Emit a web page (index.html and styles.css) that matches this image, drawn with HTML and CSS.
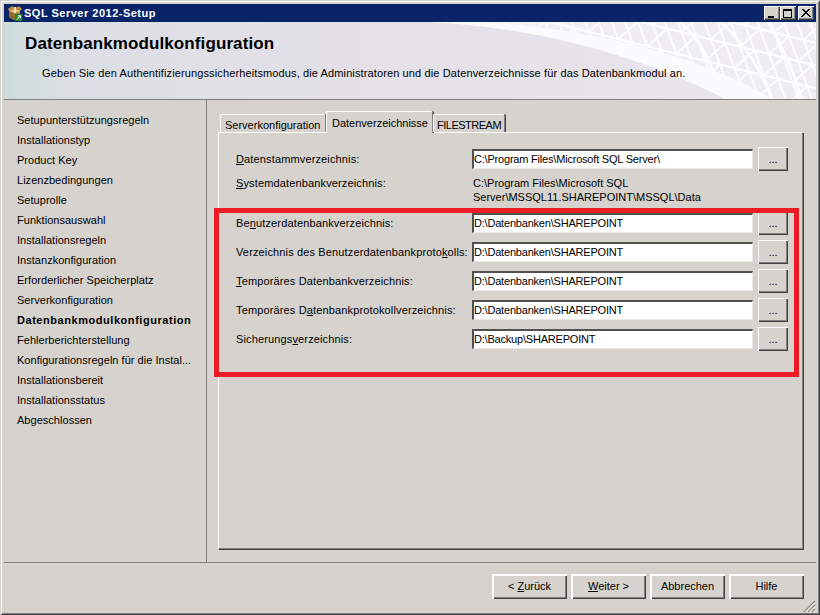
FILE: index.html
```html
<!DOCTYPE html>
<html lang="de">
<head>
<meta charset="utf-8">
<title>SQL Server 2012-Setup</title>
<link rel="stylesheet" href="styles.css">
</head>
<body>
<div class="window">
  <div class="titlebar">
    <svg class="app-icon" width="16" height="16" viewBox="0 0 16 16">
      <path d="M1 4 L5 1 L8 3 L12 1 L15 4 L13 6 L13 12 L7 15 L2 12 L2 6 Z" fill="#b98c44"/>
      <path d="M2 6 L8 8 L13 6 L8 4 Z" fill="#e3c27c"/>
      <path d="M7 2 L9 2 L9 8 L7 8 Z" fill="#f3e2b0"/>
      <path d="M2 6 L7 8 L7 15 L2 12 Z" fill="#94692c"/>
      <rect x="8" y="9" width="7" height="7" fill="#2f8f2f" stroke="#1c5f1c" stroke-width="0.6"/>
      <path d="M10 14.5 L13.2 11 M11 10.8 H13.5 V13.2" stroke="#fff" stroke-width="1" fill="none"/>
    </svg>
    <span class="title-text">SQL Server 2012-Setup</span>
    <div class="caption-buttons">
      <button class="cap-btn" aria-label="Minimieren"><svg width="10" height="9" viewBox="0 0 10 9"><rect x="1" y="7" width="6" height="2" fill="#000"/></svg></button>
      <button class="cap-btn" aria-label="Maximieren"><svg width="10" height="9" viewBox="0 0 10 9"><path d="M0 0H9V9H0Z M1 2V8H8V2Z" fill="#000" fill-rule="evenodd"/></svg></button>
      <button class="cap-btn cap-close" aria-label="Schließen"><svg width="10" height="9" viewBox="0 0 10 9"><path d="M1 0 L9 8 M9 0 L1 8 M2 0 L10 8 M8 0 L0 8" stroke="#000" stroke-width="1" fill="none"/></svg></button>
    </div>
  </div>

  <header class="banner">
    <svg class="banner-art" width="812" height="78" viewBox="0 0 812 78">
      <defs>
        <linearGradient id="bg" x1="0" x2="1" y1="0" y2="0">
          <stop offset="0" stop-color="#cedcde"/>
          <stop offset="0.09" stop-color="#dcdfe5"/>
          <stop offset="0.4" stop-color="#e3e0e8"/>
          <stop offset="1" stop-color="#e9e6ec"/>
        </linearGradient>
        <linearGradient id="fade" x1="0" x2="1" y1="0" y2="0">
          <stop offset="0" stop-color="#f8f6f9" stop-opacity="1"/>
          <stop offset="1" stop-color="#f8f6f9" stop-opacity="0"/>
        </linearGradient>
        <pattern id="mesh" width="30" height="22" patternUnits="userSpaceOnUse" patternTransform="rotate(14)">
          <rect width="30" height="22" fill="#efecf2"/>
          <path d="M0 0 H30 M0 22 H30 M0 22 L15 0 L30 22 M0 0 L15 22" stroke="#fff" stroke-width="1.8" fill="none"/>
        </pattern>
        <clipPath id="upper"><path d="M480 0 C600 8 700 36 770 78 L812 78 L812 0 Z"/></clipPath>
      </defs>
      <rect width="812" height="78" fill="url(#bg)"/>
      <path d="M425 0 C545 6 650 40 723 78 L812 78 L812 0 Z" fill="#fbfafc"/>
      <g clip-path="url(#upper)">
        <rect x="470" width="342" height="78" fill="url(#mesh)"/>
        <path d="M676 0 C700 20 712 50 716 78 M716 0 C742 22 758 50 768 78 M764 0 C778 22 790 50 798 78" stroke="#fff" stroke-width="2.5" fill="none"/>
        <rect x="470" width="130" height="78" fill="url(#fade)"/>
      </g>
    </svg>
    <h1 class="banner-title">Datenbankmodulkonfiguration</h1>
    <p class="banner-desc">Geben Sie den Authentifizierungssicherheitsmodus, die Administratoren und die Datenverzeichnisse für das Datenbankmodul an.</p>
  </header>

  <main class="middle">
    <nav class="steps">
      <div class="step">Setupunterstützungsregeln</div>
      <div class="step">Installationstyp</div>
      <div class="step">Product Key</div>
      <div class="step">Lizenzbedingungen</div>
      <div class="step">Setuprolle</div>
      <div class="step">Funktionsauswahl</div>
      <div class="step">Installationsregeln</div>
      <div class="step">Instanzkonfiguration</div>
      <div class="step">Erforderlicher Speicherplatz</div>
      <div class="step">Serverkonfiguration</div>
      <div class="step step-current">Datenbankmodulkonfiguration</div>
      <div class="step">Fehlerberichterstellung</div>
      <div class="step">Konfigurationsregeln für die Instal...</div>
      <div class="step">Installationsbereit</div>
      <div class="step">Installationsstatus</div>
      <div class="step">Abgeschlossen</div>
    </nav>

    <section class="content">
      <div class="tabs">
        <div class="tab tab-first">Serverkonfiguration</div>
        <div class="tab tab-active">Datenverzeichnisse</div>
        <div class="tab tab-last">FILESTREAM</div>
      </div>
      <div class="panel">
        <div class="form">
          <label class="lbl"><u>D</u>atenstammverzeichnis:</label>
          <div class="field">C:\Program Files\Microsoft SQL Server\</div>
          <button class="browse">...</button>

          <label class="lbl lbl-top"><u>S</u>ystemdatenbankverzeichnis:</label>
          <div class="static-path">C:\Program Files\Microsoft SQL Server\MSSQL11.SHAREPOINT\MSSQL\Data</div>
          <div></div>

          <label class="lbl">Be<u>n</u>utzerdatenbankverzeichnis:</label>
          <div class="field">D:\Datenbanken\SHAREPOINT</div>
          <button class="browse">...</button>

          <label class="lbl">Verzeichnis des Benutzerdatenbankproto<u>k</u>olls:</label>
          <div class="field">D:\Datenbanken\SHAREPOINT</div>
          <button class="browse">...</button>

          <label class="lbl"><u>T</u>emporäres Datenbankverzeichnis:</label>
          <div class="field">D:\Datenbanken\SHAREPOINT</div>
          <button class="browse">...</button>

          <label class="lbl">Temporäres D<u>a</u>tenbankprotokollverzeichnis:</label>
          <div class="field">D:\Datenbanken\SHAREPOINT</div>
          <button class="browse">...</button>

          <label class="lbl">Sicherungs<u>v</u>erzeichnis:</label>
          <div class="field">D:\Backup\SHAREPOINT</div>
          <button class="browse">...</button>
        </div>
      </div>
    </section>
  </main>

  <footer class="footer">
    <button class="btn">&lt; <u>Z</u>urück</button>
    <button class="btn"><u>W</u>eiter &gt;</button>
    <button class="btn">Abbrechen</button>
    <button class="btn">Hilfe</button>
    <svg class="grip" width="13" height="13" viewBox="0 0 13 13">
      <path d="M12 1 L1 12 M12 5 L5 12 M12 9 L9 12" stroke="#808080" stroke-width="1.2" fill="none"/>
      <path d="M12 2.5 L2.5 12 M12 6.5 L6.5 12 M12 10.5 L10.5 12" stroke="#fff" stroke-width="1" fill="none"/>
    </svg>
  </footer>

  <div class="highlight"></div>
</div>
</body>
</html>
```
FILE: styles.css
```css
* { box-sizing: border-box; }
html, body { margin: 0; padding: 0; }
body { width: 820px; height: 615px; overflow: hidden; font-family: "Liberation Sans", Arial, sans-serif; font-size: 11px; color: #000; }
u { text-underline-offset: 1px; }

.window {
  position: relative;
  width: 820px;
  height: 615px;
  display: flex;
  flex-direction: column;
  padding: 4px 4px 2px;
  background: #d6d3ce;
  box-shadow: inset 1px 1px 0 #d6d3ce, inset -1px -1px 0 #404040, inset 2px 2px 0 #fff, inset -2px -2px 0 #808080;
}

.titlebar {
  height: 18px;
  flex: none;
  display: flex;
  align-items: center;
  background: #0a246a;
  color: #fff;
  padding: 0 2px 0 3px;
}
.app-icon { flex: none; margin-right: 1px; }
.title-text { font-weight: bold; font-size: 11px; letter-spacing: 0.5px; }
.caption-buttons { margin-left: auto; display: flex; }
.cap-btn {
  width: 16px;
  height: 14px;
  padding: 0;
  display: flex;
  align-items: center;
  justify-content: center;
  background: #d6d3ce;
  border: 0;
  box-shadow: inset 1px 1px 0 #fff, inset -1px -1px 0 #404040, inset -2px -2px 0 #808080;
}
.cap-close { margin-left: 2px; }

.banner {
  position: relative;
  height: 78px;
  flex: none;
  overflow: hidden;
  padding: 12px 21px 0;
  border-bottom: 1px solid #808080;
}
.banner-art { position: absolute; left: 0; top: 0; }
.banner-title { position: relative; margin: 0; font-size: 17px; line-height: 20px; font-weight: bold; letter-spacing: 0.1px; }
.banner-desc { position: relative; margin: 12px 0 0 17px; line-height: 14px; white-space: nowrap; letter-spacing: 0.12px; }

.middle {
  flex: 1;
  min-height: 0;
  display: flex;
  border-bottom: 1px solid #808080;
}
.steps {
  width: 203px;
  flex: none;
  padding: 10px 0 0 13px;
  border-right: 1px solid #808080;
}
.step { height: 20px; line-height: 20px; white-space: nowrap; letter-spacing: 0.03px; }
.step-current { font-weight: bold; letter-spacing: 0.55px; }

.content {
  flex: 1;
  min-width: 0;
  padding: 11px 13px 13px 11px;
  display: flex;
  flex-direction: column;
}
.tabs { display: flex; height: 21px; flex: none; align-items: flex-end; position: relative; z-index: 1; }
.tab {
  height: 18px;
  line-height: 18px;
  padding: 1px 4px 0;
  background: #d6d3ce;
  border-top: 1px solid #fff;
  border-left: 1px solid #fff;
  border-right: 1px solid #808080;
  box-shadow: 1px 0 0 #404040;
  border-radius: 2px 2px 0 0;
  white-space: nowrap;
}
.tab-first { width: 106px; margin-left: 2px; }
.tab-active { width: 107px; height: 22px; line-height: 22px; padding: 0 5px; margin-bottom: -1px; text-align: center; }
.tab-last { width: 72px; padding-left: 3px; padding-right: 0; letter-spacing: -0.5px; }

.panel {
  flex: 1;
  min-height: 0;
  background: #d6d3ce;
  border-top: 1px solid #fff;
  border-left: 1px solid #fff;
  border-right: 1px solid #808080;
  border-bottom: 1px solid #808080;
  box-shadow: 1px 1px 0 #404040;
  padding: 14px 0 0 17px;
}
.form {
  display: grid;
  grid-template-columns: 231px 281px 30px;
  grid-template-rows: 24px 30px 24px 24px 24px 24px 24px;
  column-gap: 5px;
  row-gap: 5px;
  align-items: center;
}
.lbl { white-space: nowrap; letter-spacing: 0.14px; }
.lbl-top { align-self: start; padding-top: 1px; }
.field {
  height: 20px;
  line-height: 16px;
  padding: 0;
  background: #fff;
  white-space: nowrap;
  letter-spacing: -0.2px;
  border-top: 2px solid #505050;
  border-left: 2px solid #505050;
  border-right: 1px solid #eceae6;
  border-bottom: 1px solid #eceae6;
}
.static-path { align-self: start; padding: 0 0 0 1px; line-height: 14px; }
.browse, .btn {
  font: inherit;
  color: #000;
  padding: 0;
  border: 0;
  background: #d6d3ce;
  box-shadow: inset 1px 1px 0 #fff, inset -1px -1px 0 #404040, inset -2px -2px 0 #808080;
}
.browse { width: 30px; height: 24px; }

.footer {
  position: relative;
  flex: none;
  height: 50px;
  display: flex;
  justify-content: flex-end;
  gap: 4px;
  padding: 11px 12px 0 0;
}
.btn { width: 75px; height: 25px; padding-bottom: 2px; box-shadow: inset 2px 2px 0 #fff, inset -1px -1px 0 #404040, inset -2px -2px 0 #808080; }
.grip { position: absolute; right: 0; bottom: 0; }

.highlight {
  position: absolute;
  left: 214px;
  top: 208px;
  width: 585px;
  height: 169px;
  border: 5px solid #ed1c24;
}
```
